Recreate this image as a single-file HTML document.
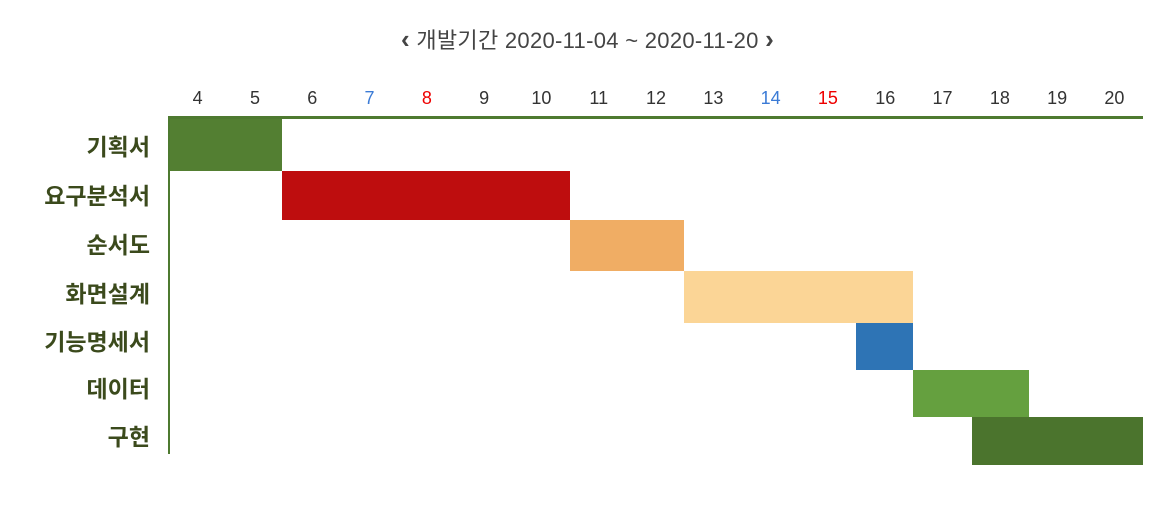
<!DOCTYPE html>
<html><head><meta charset="utf-8"><style>
body{margin:0;width:1163px;height:529px;background:#fff;position:relative;font-family:"Liberation Sans","Noto Sans CJK KR",sans-serif;overflow:hidden}
.t{position:absolute;top:23px;left:0;width:1163px;text-align:center;font-size:22px;color:#444;padding-left:12px;box-sizing:border-box;letter-spacing:0.3px}
.t span{font-size:26px;font-weight:bold;line-height:22px}
.d{position:absolute;top:88px;width:57.3px;text-align:center;font-size:18px;color:#333}
.l{position:absolute;right:1013px;font-size:23px;font-weight:bold;color:#3b4a1c;white-space:nowrap}
.b{position:absolute}
</style></head><body>
<div class="t"><span>‹</span> 개발기간 2020-11-04 ~ 2020-11-20 <span>›</span></div>
<div class="d" style="left:169px">4</div>
<div class="d" style="left:226.3px">5</div>
<div class="d" style="left:283.6px">6</div>
<div class="d" style="left:340.9px;color:#3b7bd6">7</div>
<div class="d" style="left:398.2px;color:#e00">8</div>
<div class="d" style="left:455.5px">9</div>
<div class="d" style="left:512.8px">10</div>
<div class="d" style="left:570.1px">11</div>
<div class="d" style="left:627.4px">12</div>
<div class="d" style="left:684.7px">13</div>
<div class="d" style="left:742px;color:#3b7bd6">14</div>
<div class="d" style="left:799.3px;color:#e00">15</div>
<div class="d" style="left:856.6px">16</div>
<div class="d" style="left:913.9px">17</div>
<div class="d" style="left:971.2px">18</div>
<div class="d" style="left:1028.5px">19</div>
<div class="d" style="left:1085.8px">20</div>
<div class="b" style="left:169px;top:116px;width:974px;height:3px;background:#4e7a30"></div>
<div class="b" style="left:168px;top:116px;width:2px;height:338px;background:#4e7a30"></div>
<div class="b" style="left:170px;top:119px;width:112px;height:52px;background:#537f32"></div>
<div class="b" style="left:282px;top:171px;width:288px;height:49px;background:#be0d0e"></div>
<div class="b" style="left:570px;top:220px;width:114px;height:51px;background:#f0ad64"></div>
<div class="b" style="left:684px;top:271px;width:229px;height:52px;background:#fbd596"></div>
<div class="b" style="left:856px;top:323px;width:57px;height:47px;background:#2e74b5"></div>
<div class="b" style="left:913px;top:370px;width:116px;height:47px;background:#65a03f"></div>
<div class="b" style="left:972px;top:417px;width:171px;height:48px;background:#4b742d"></div>
<div class="l" style="top:128px">기획서</div>
<div class="l" style="top:177px">요구분석서</div>
<div class="l" style="top:226px">순서도</div>
<div class="l" style="top:275px">화면설계</div>
<div class="l" style="top:323px">기능명세서</div>
<div class="l" style="top:370px">데이터</div>
<div class="l" style="top:418px">구현</div>
</body></html>
